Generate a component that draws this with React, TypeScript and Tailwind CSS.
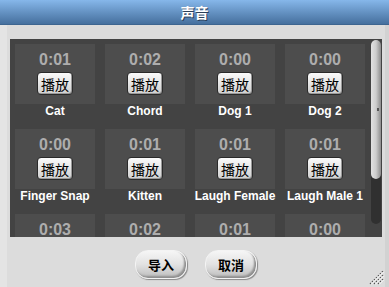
import React from 'react';

interface Sound {
  name: string;
  time: string;
}

const sounds: Sound[] = [
  { name: 'Cat', time: '0:01' },
  { name: 'Chord', time: '0:02' },
  { name: 'Dog 1', time: '0:00' },
  { name: 'Dog 2', time: '0:00' },
  { name: 'Finger Snap', time: '0:00' },
  { name: 'Kitten', time: '0:01' },
  { name: 'Laugh Female', time: '0:01' },
  { name: 'Laugh Male 1', time: '0:01' },
  // next row is scrolled out of view, only the times peek in
  { name: '', time: '0:03' },
  { name: '', time: '0:02' },
  { name: '', time: '0:01' },
  { name: '', time: '0:00' },
];

const latin = { fontFamily: '"Liberation Sans", Arial, "Noto Sans CJK SC", sans-serif' };
const cjk = { fontFamily: '"Noto Sans CJK SC", "Liberation Sans", sans-serif' };

const SoundTile: React.FC<{ sound: Sound }> = ({ sound }) => (
  <div className="flex flex-col items-center">
    <div className="w-[80px] h-[60px] bg-[#4d4d4d] flex flex-col items-center pt-[7px]">
      <div className="text-[16px] leading-[18px] font-bold text-[#adadad]" style={latin}>
        {sound.time}
      </div>
      <button
        className="mt-[3px] h-[23px] w-[36px] flex items-center justify-center rounded-[4px] border border-[#2a2a2a] bg-gradient-to-b from-[#fbfbfb] to-[#cfcfcf] text-[14px] leading-none text-black shadow-[inset_-1px_-1px_0_#9a9a9a]"
        style={cjk}
      >
        播放
      </button>
    </div>
    <div className="h-[15px] text-[12px] leading-[15px] font-bold text-white whitespace-nowrap" style={latin}>
      {sound.name}
    </div>
  </div>
);

const PillButton: React.FC<{ label: string }> = ({ label }) => (
  <button
    className="w-[52px] h-[29px] rounded-[13px] border border-[#f4f4f4] bg-gradient-to-b from-[#f6f6f6] via-[#e2e2e2] to-[#bdbdbd] shadow-[1px_1px_1px_#8a8a8a,inset_-2px_-2px_2px_#8f8f8f] flex items-center justify-center text-[13px] font-bold text-black"
    style={cjk}
  >
    {label}
  </button>
);

export default function App() {
  return (
    <div className="w-[389px] h-[287px] flex flex-col bg-[#dcdcdc] overflow-hidden">
      {/* Title bar */}
      <div className="h-[25px] shrink-0 bg-gradient-to-b from-[#86b7ea] to-[#46709e] flex items-center justify-center border-b border-[#3d6590]">
        <span
          className="text-[14px] font-bold text-white [text-shadow:1px_1px_0_#2a3f58]"
          style={cjk}
        >
          声音
        </span>
      </div>

      {/* Body */}
      <div className="relative flex-1 flex flex-col border-l-[7px] border-l-[#e4e4e4] border-r-[4px] border-r-[#d2d2d2]">
        <div className="ml-[3px] mt-[14px] w-[372px] h-[198px] bg-[#434343] flex items-start overflow-hidden">
          <div className="pl-[5px] pt-[5px] grid grid-cols-[repeat(4,80px)] gap-x-[10px] gap-y-[10px]">
            {sounds.map((s, i) => (
              <SoundTile key={i} sound={s} />
            ))}
          </div>
          {/* Scrollbar */}
          <div className="ml-[6px] mt-[1px] w-[10px] h-[184px] rounded-full bg-[#303030] flex flex-col">
            <div className="h-[139px] rounded-full bg-gradient-to-r from-[#e2e2e2] via-[#cdcdcd] to-[#8d8d8d] flex flex-col items-center justify-center">
              <div className="w-[2px] h-[3px] bg-[#555] ml-[4px]" />
            </div>
          </div>
        </div>

        {/* Footer buttons */}
        <div className="flex justify-center gap-[18px] mt-[13px]">
          <PillButton label="导入" />
          <PillButton label="取消" />
        </div>

        {/* Resize grip */}
        <svg className="absolute right-[1px] bottom-[2px]" width="16" height="16" viewBox="0 0 16 16">
          <g stroke="#555" strokeWidth="1.2" strokeDasharray="1.4 1.4">
            <line x1="2" y1="15" x2="15" y2="2" />
            <line x1="6" y1="15" x2="15" y2="6" />
            <line x1="10" y1="15" x2="15" y2="10" />
          </g>
          <g stroke="#fff" strokeWidth="1">
            <line x1="3" y1="15.5" x2="15.5" y2="3" />
            <line x1="7" y1="15.5" x2="15.5" y2="7" />
            <line x1="11" y1="15.5" x2="15.5" y2="11" />
          </g>
        </svg>
      </div>
    </div>
  );
}
